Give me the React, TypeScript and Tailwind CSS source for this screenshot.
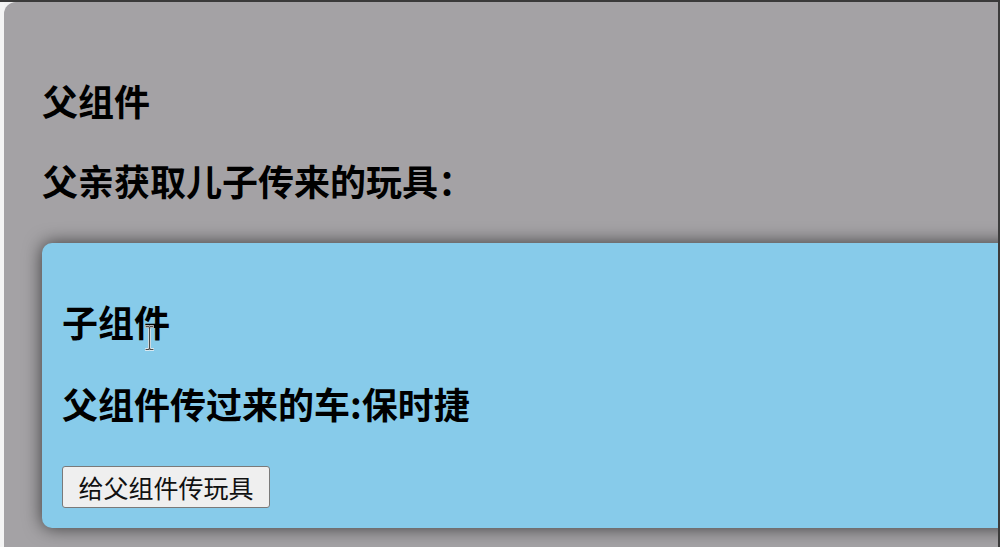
const IBeam = () => (
  <svg width="9" height="26" viewBox="0 0 9 26" fill="none">
    <path d="M1 1.5H3.5L4.5 2.5L5.5 1.5H8M4.5 2.5V23.5M1 24.5H3.5L4.5 23.5L5.5 24.5H8" stroke="#f4f4f4" strokeWidth="2.6" strokeLinecap="round" />
    <path d="M1 1.5H3.5L4.5 2.5L5.5 1.5H8M4.5 2.5V23.5M1 24.5H3.5L4.5 23.5L5.5 24.5H8" stroke="#4a4a4a" strokeWidth="1.2" strokeLinecap="round" />
  </svg>
)

export default function App() {
  const font = { fontFamily: '"Noto Sans CJK SC", "Noto Sans", sans-serif' }

  return (
    <div className="w-full h-[547px] overflow-hidden bg-[#f2f2f2] flex flex-col" style={font}>
      <div className="h-[2px] bg-[#3a3a3a] shrink-0" />
      <div className="flex flex-1 min-h-0">
        <div className="w-[4px] shrink-0 bg-[#f4f4f4]" />
        <div className="flex-1 min-w-0 bg-[#a4a2a5] rounded-tl-[12px] overflow-hidden pl-[38px] pt-[80px] text-black">
          <h2 className="text-[36px] leading-[36px] font-bold">父组件</h2>
          <h2 className="mt-[44px] text-[36px] leading-[36px] font-bold">父亲获取儿子传来的玩具：</h2>

          {/* Child */}
          <div className="relative mt-[45px] mr-[-30px] bg-[#87cbea] rounded-[10px] pl-[20px] pt-[60px] pb-[20px] shadow-[0_0_18px_rgba(0,0,0,0.65)]">
            <h2 className="text-[36px] leading-[36px] font-bold">子组件</h2>
            <h2 className="mt-[46px] text-[36px] leading-[36px] font-bold">父组件传过来的车:保时捷</h2>
            <button className="mt-[45px] h-[42px] w-[208px] flex items-center justify-center bg-[#efefef] border border-[#7a7a7a] rounded-[3px] text-[25px] leading-none text-[#111]">
              给父组件传玩具
            </button>
            <div className="absolute left-[103px] top-[82px] pointer-events-none">
              <IBeam />
            </div>
          </div>
        </div>
        <div className="w-[2px] shrink-0 bg-[#3c3c3c]" />
      </div>
    </div>
  )
}
